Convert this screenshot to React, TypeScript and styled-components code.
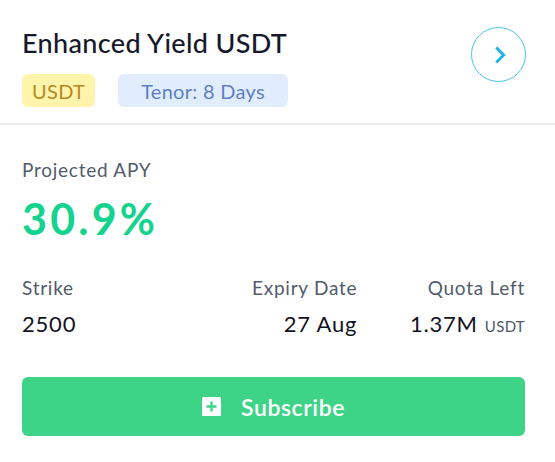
import styled, { createGlobalStyle } from "styled-components";

const GlobalStyle = createGlobalStyle`
    body {
        margin: 0;
        background: #ffffff;
        font-family: Lato, "Noto Sans", sans-serif;
        color: #16192b;
    }
`;

const stats = [
    { label: "Strike", value: "2500", align: "left" },
    { label: "Expiry Date", value: "27 Aug", align: "right" },
    { label: "Quota Left", value: "1.37M", unit: "USDT", align: "right" },
];

const App = () => {
    return (
        <>
            <GlobalStyle />
            <Card>
                <Header>
                    <TitleBlock>
                        <Title>Enhanced Yield USDT</Title>
                        <Tags>
                            <Tag $tone="yellow">USDT</Tag>
                            <Tag $tone="blue">Tenor: 8 Days</Tag>
                        </Tags>
                    </TitleBlock>
                    <CircleButton aria-label="Open">
                        <svg width="22" height="22" viewBox="0 0 24 24" fill="none">
                            <path d="M9 5l7 7-7 7" stroke="#1db4ea" strokeWidth="3.2" strokeLinecap="square" />
                        </svg>
                    </CircleButton>
                </Header>

                <Body>
                    <Label>Projected APY</Label>
                    <Apy>30.9%</Apy>

                    <StatGrid>
                        {stats.map((s) => (
                            <Stat key={s.label} $align={s.align}>
                                <Label>{s.label}</Label>
                                <Value>
                                    {s.value}
                                    {s.unit && <Unit>{s.unit}</Unit>}
                                </Value>
                            </Stat>
                        ))}
                    </StatGrid>

                    <SubscribeButton>
                        <svg width="19" height="19" viewBox="0 0 19 19">
                            <rect width="19" height="19" rx="1.5" fill="#ffffff" />
                            <path d="M9.5 4.5v10M4.5 9.5h10" stroke="#3dd487" strokeWidth="2.4" />
                        </svg>
                        Subscribe
                    </SubscribeButton>
                </Body>
            </Card>
        </>
    );
};

const Card = styled.main`
    width: 555px;
    height: 462px;
    background: #ffffff;
`;

const Header = styled.header`
    display: flex;
    justify-content: space-between;
    align-items: flex-start;
    padding: 26px 29px 16px 22px;
    border-bottom: 2px solid #ececee;
`;

const TitleBlock = styled.div`
    display: flex;
    flex-direction: column;
`;

const Title = styled.h1`
    margin: 0;
    font-size: 27px;
    line-height: 34px;
    font-weight: 500;
    letter-spacing: 0.35px;
    color: #16192b;
`;

const Tags = styled.div`
    display: flex;
    gap: 23px;
    margin-top: 14px;
`;

const Tag = styled.span<{ $tone: "yellow" | "blue" }>`
    display: inline-flex;
    align-items: center;
    height: 33px;
    padding: 0 ${(p) => (p.$tone === "yellow" ? "10px" : "23px")};
    border-radius: 6px;
    font-size: 20px;
    letter-spacing: 0.3px;
    background: ${(p) => (p.$tone === "yellow" ? "#fff4ac" : "#e1edfd")};
    color: ${(p) => (p.$tone === "yellow" ? "#b58a22" : "#5f7fc4")};
`;

const CircleButton = styled.button`
    width: 55px;
    height: 55px;
    margin-top: 1px;
    border-radius: 50%;
    border: 1.5px solid #43c5ef;
    background: #ffffff;
    display: flex;
    align-items: center;
    justify-content: center;
    padding: 0 0 0 3px;
    cursor: pointer;
`;

const Body = styled.section`
    padding: 33px 30px 0 22px;
    display: flex;
    flex-direction: column;
`;

const Label = styled.div`
    font-size: 19px;
    line-height: 24px;
    letter-spacing: 0.75px;
    color: #525b6b;
`;

const Apy = styled.div`
    margin-top: 13px;
    font-size: 43px;
    line-height: 48px;
    font-weight: 700;
    letter-spacing: 3.2px;
    color: #13d38e;
`;

const StatGrid = styled.div`
    display: grid;
    grid-template-columns: repeat(3, 1fr);
    margin-top: 33px;
`;

const Stat = styled.div<{ $align: string }>`
    display: flex;
    flex-direction: column;
    gap: 10px;
    text-align: ${(p) => p.$align};
`;

const Value = styled.div`
    font-size: 22px;
    line-height: 28px;
    letter-spacing: 0.8px;
    color: #111322;
`;

const Unit = styled.span`
    margin-left: 7px;
    font-size: 15px;
    letter-spacing: 0.3px;
    color: #4d5666;
`;

const SubscribeButton = styled.button`
    margin-top: 37px;
    height: 59px;
    width: 100%;
    border: none;
    border-radius: 6px;
    background: #3dd487;
    color: #ffffff;
    font-family: Lato, "Noto Sans", sans-serif;
    font-size: 23px;
    font-weight: 600;
    letter-spacing: 0.6px;
    display: flex;
    align-items: center;
    justify-content: center;
    gap: 20px;
    cursor: pointer;
`;

export default App;
